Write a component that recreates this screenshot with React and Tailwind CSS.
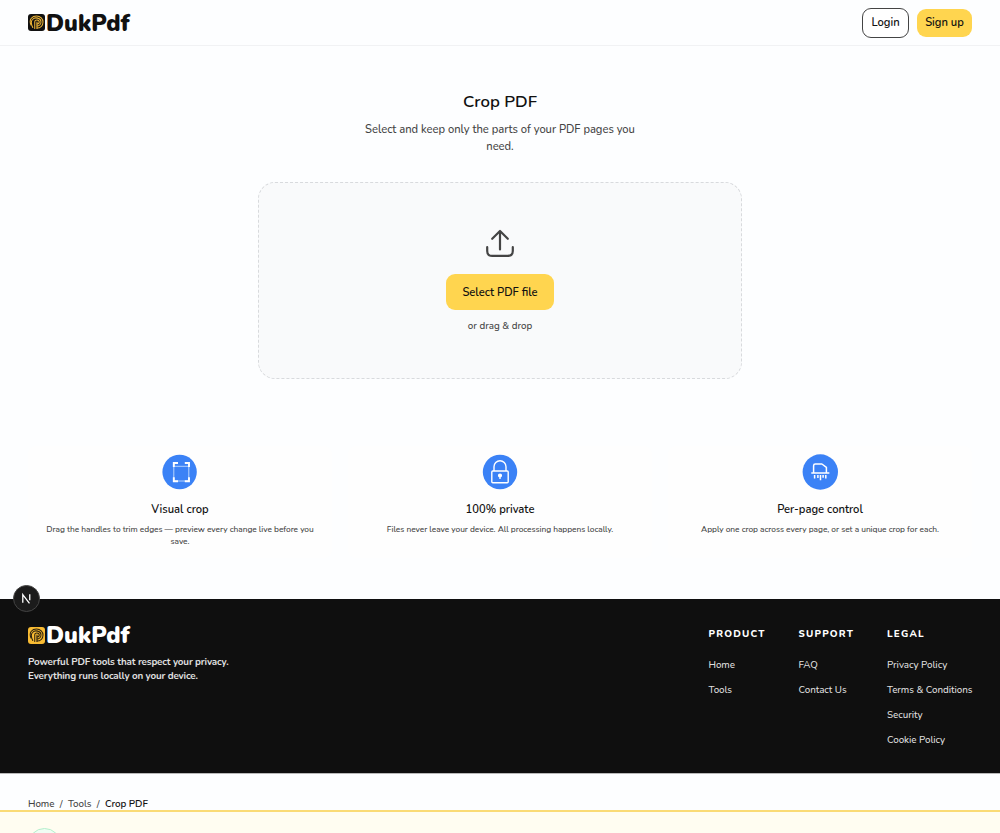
import { clsx } from 'clsx'

const features = [
    {
        title: 'Visual crop',
        text: 'Drag the handles to trim edges — preview every change live before you save.',
        icon: CropIcon,
    },
    {
        title: '100% private',
        text: 'Files never leave your device. All processing happens locally.',
        icon: LockIcon,
    },
    {
        title: 'Per-page control',
        text: 'Apply one crop across every page, or set a unique crop for each.',
        icon: ShredIcon,
    },
]

const footerColumns = [
    { title: 'PRODUCT', width: 'w-[90px]', links: ['Home', 'Tools'] },
    { title: 'SUPPORT', width: 'w-[88.5px]', links: ['FAQ', 'Contact Us'] },
    { title: 'LEGAL', width: 'w-[85px]', links: ['Privacy Policy', 'Terms & Conditions', 'Security', 'Cookie Policy'] },
]

function CropIcon() {
    return (
        <svg viewBox="0 0 36 36" className="size-9" fill="none">
            <circle cx="17.6" cy="18" r="17.2" fill="#3b82f6" />
            <path d="M11.8 9.5V27M26.8 9.5V27M11.8 12.3h15M11.8 27h15" stroke="#b5d3ff" strokeWidth="1" />
            <path d="M11.8 12.9V9h4.2M22.8 9h4.2v3.9M27 23.3v4h-4.2M16 27.3h-4.2v-4" stroke="#fff" strokeWidth="1.9" />
        </svg>
    )
}

function LockIcon() {
    return (
        <svg viewBox="0 0 36 36" className="size-9" fill="none">
            <circle cx="18" cy="18" r="17.2" fill="#3b82f6" />
            <g stroke="#fff" strokeWidth="1.4" strokeLinejoin="round">
                <rect x="9.8" y="17" width="16.4" height="11.8" rx="1" />
                <path d="M12 17v-4.3a6 6 0 0 1 12 0V17" />
                <circle cx="18" cy="21.5" r="1.4" fill="#fff" />
                <path d="M18 21.5v3.6" />
            </g>
        </svg>
    )
}

function ShredIcon() {
    return (
        <svg viewBox="0 0 36 36" className="size-9" fill="none">
            <circle cx="18.3" cy="18" r="17.7" fill="#3b82f6" />
            <g stroke="#fff" strokeWidth="1.5">
                <path d="M9.8 19h17" strokeLinecap="round" />
                <path d="M11.6 19v-7.3q0-1.7 1.7-1.7h6.6l4.5 3.3V19" strokeLinejoin="round" />
                <path d="M12.6 21v3.4M15.9 21v3M18.5 21v5.3M21.1 21v2.8M23.8 21v3.6" />
            </g>
        </svg>
    )
}

function Logo({ dark }) {
    return (
        <div className={clsx('flex h-6 items-center gap-[1px]', dark ? 'text-white' : 'text-[#111]')}>
            <svg viewBox="0 0 34 34" className="size-[17px] shrink-0" fill="none">
                <rect width="34" height="34" rx="6" fill={dark ? '#f8bb33' : '#111'} />
                <g stroke={dark ? '#2a210f' : '#efb536'} strokeWidth="2.1" strokeLinecap="round">
                    <path d="M6 22C1 10 9 4 17 4c8 0 13 6 13 12 0 7-5 12-12 12" />
                    <path d="M9.5 27C6 20 6 14 9 11c5-6 17-3 17 5 0 5-4 8-8 8" />
                    <path d="M13.5 29V16c0-6 9-5 9 0 0 3-2 4-4.5 4" />
                    <path d="M18 16v13" />
                </g>
            </svg>
            <span className="pt-px text-[23px] leading-none font-black">DukPdf</span>
        </div>
    )
}

function Header() {
    return (
        <header className="flex h-[46px] items-center justify-between border-b border-[#f1f2f4] px-7">
            <Logo />
            <div className="flex gap-2 text-[11.2px] font-semibold text-[#111]">
                <button className="h-[30px] w-[47px] rounded-[9px] border border-[#444] bg-white pt-0.5">Login</button>
                <button className="my-auto h-7 w-[55px] rounded-[9px] bg-[#ffd54f] pt-0.5">Sign up</button>
            </div>
        </header>
    )
}

function DropZone() {
    return (
        <div className="mx-auto mt-[27px] flex h-[197px] w-[484px] flex-col items-center rounded-[17px] border border-dashed border-[#d8dadd] bg-[#f9fafb] pt-[46px]">
            <svg viewBox="0 0 30 30" className="size-[30px]" fill="none" stroke="#444" strokeWidth="2.2" strokeLinecap="round" strokeLinejoin="round">
                <path d="M15 20.5V2.4M7.2 9.8 15 2l7.8 7.8M2.2 18.2v3.7q0 5 5 5h15.6q5 0 5-5v-3.7" />
            </svg>
            <button className="mt-[15px] h-9 w-[108px] rounded-[9px] bg-[#ffd54f] pt-0.5 text-[11.2px] font-semibold whitespace-nowrap text-[#111]">
                Select PDF file
            </button>
            <p className="mt-[9px] text-[9.8px] leading-[14px] font-medium text-[#444]">or drag &amp; drop</p>
        </div>
    )
}

function Feature({ title, text, icon: Icon }) {
    return (
        <div className="flex flex-1 flex-col items-center rounded-lg bg-[#fefefe] px-4 pt-2 text-center">
            <Icon />
            <h3 className="mt-[12px] text-[11.2px] leading-4 font-semibold text-[#111]">{title}</h3>
            <p className="mt-[6px] text-[8.4px] leading-[12px] font-medium tracking-[-0.05px] text-[#444]">{text}</p>
        </div>
    )
}

function Footer() {
    return (
        <footer className="relative flex h-[175px] justify-between border-b border-[#b9b9b9] bg-[#0f0f0f] px-7 pt-6">
            <div className="absolute -top-[14px] left-[13px] flex size-[27px] items-center justify-center rounded-full border border-[#444] bg-[#1b1b1b]">
                <svg viewBox="0 0 14 14" className="size-[13px]" fill="none" stroke="#fff" strokeWidth="1.4">
                    <path d="M3 11.5V2.8l7.2 9.5M10.5 2.5v6.3" />
                </svg>
            </div>
            <div>
                <Logo dark />
                <p className="mt-[8px] text-[9.8px] leading-[14px] font-bold tracking-[-0.14px] whitespace-nowrap text-[#e0e0e0]">
                    Powerful PDF tools that respect your privacy.
                    <br />
                    Everything runs locally on your device.
                </p>
            </div>
            <div className="flex pt-1">
                {footerColumns.map((col) => (
                    <div key={col.title} className={clsx('whitespace-nowrap', col.width)}>
                        <h4 className="text-[9.8px] leading-[14px] font-extrabold tracking-[1.2px] text-white">{col.title}</h4>
                        <ul className="mt-[17px] space-y-[11px] text-[9.8px] leading-[14px] font-medium tracking-[-0.05px] text-[#dedede]">
                            {col.links.map((link) => (
                                <li key={link}>{link}</li>
                            ))}
                        </ul>
                    </div>
                ))}
            </div>
        </footer>
    )
}

export default function App() {
    return (
        <div className="h-[833px] overflow-hidden bg-[#fdfeff] font-['Nunito',sans-serif]">
            <Header />
            <main className="h-[553px] pt-[45px]">
                <h1 className="text-center text-[16.8px] leading-[22px] font-semibold text-[#111]">Crop PDF</h1>
                <p className="mt-2 text-center text-[11.2px] leading-[17px] font-medium tracking-[-0.02px] text-[#444]">
                    Select and keep only the parts of your PDF pages you
                    <br />
                    need.
                </p>
                <DropZone />
                <section className="mt-[67px] flex h-[112px] gap-4 px-7">
                    {features.map((feature) => (
                        <Feature key={feature.title} {...feature} />
                    ))}
                </section>
            </main>
            <Footer />
            <nav className="flex h-[37px] items-end gap-[5.4px] px-7 text-[9.8px] leading-[14px] font-medium tracking-[-0.06px] text-[#444]">
                <span>Home</span>
                <span>/</span>
                <span>Tools</span>
                <span>/</span>
                <span className="font-semibold text-[#111]">Crop PDF</span>
            </nav>
            <div className="-mt-px h-6 overflow-hidden border-t-2 border-[#fadb76] bg-[#fffdf1] px-7 pt-4">
                <div className="size-[33px] rounded-full border-[1.5px] border-[#b4efcb] bg-[#f0fdf4]" />
            </div>
        </div>
    )
}
